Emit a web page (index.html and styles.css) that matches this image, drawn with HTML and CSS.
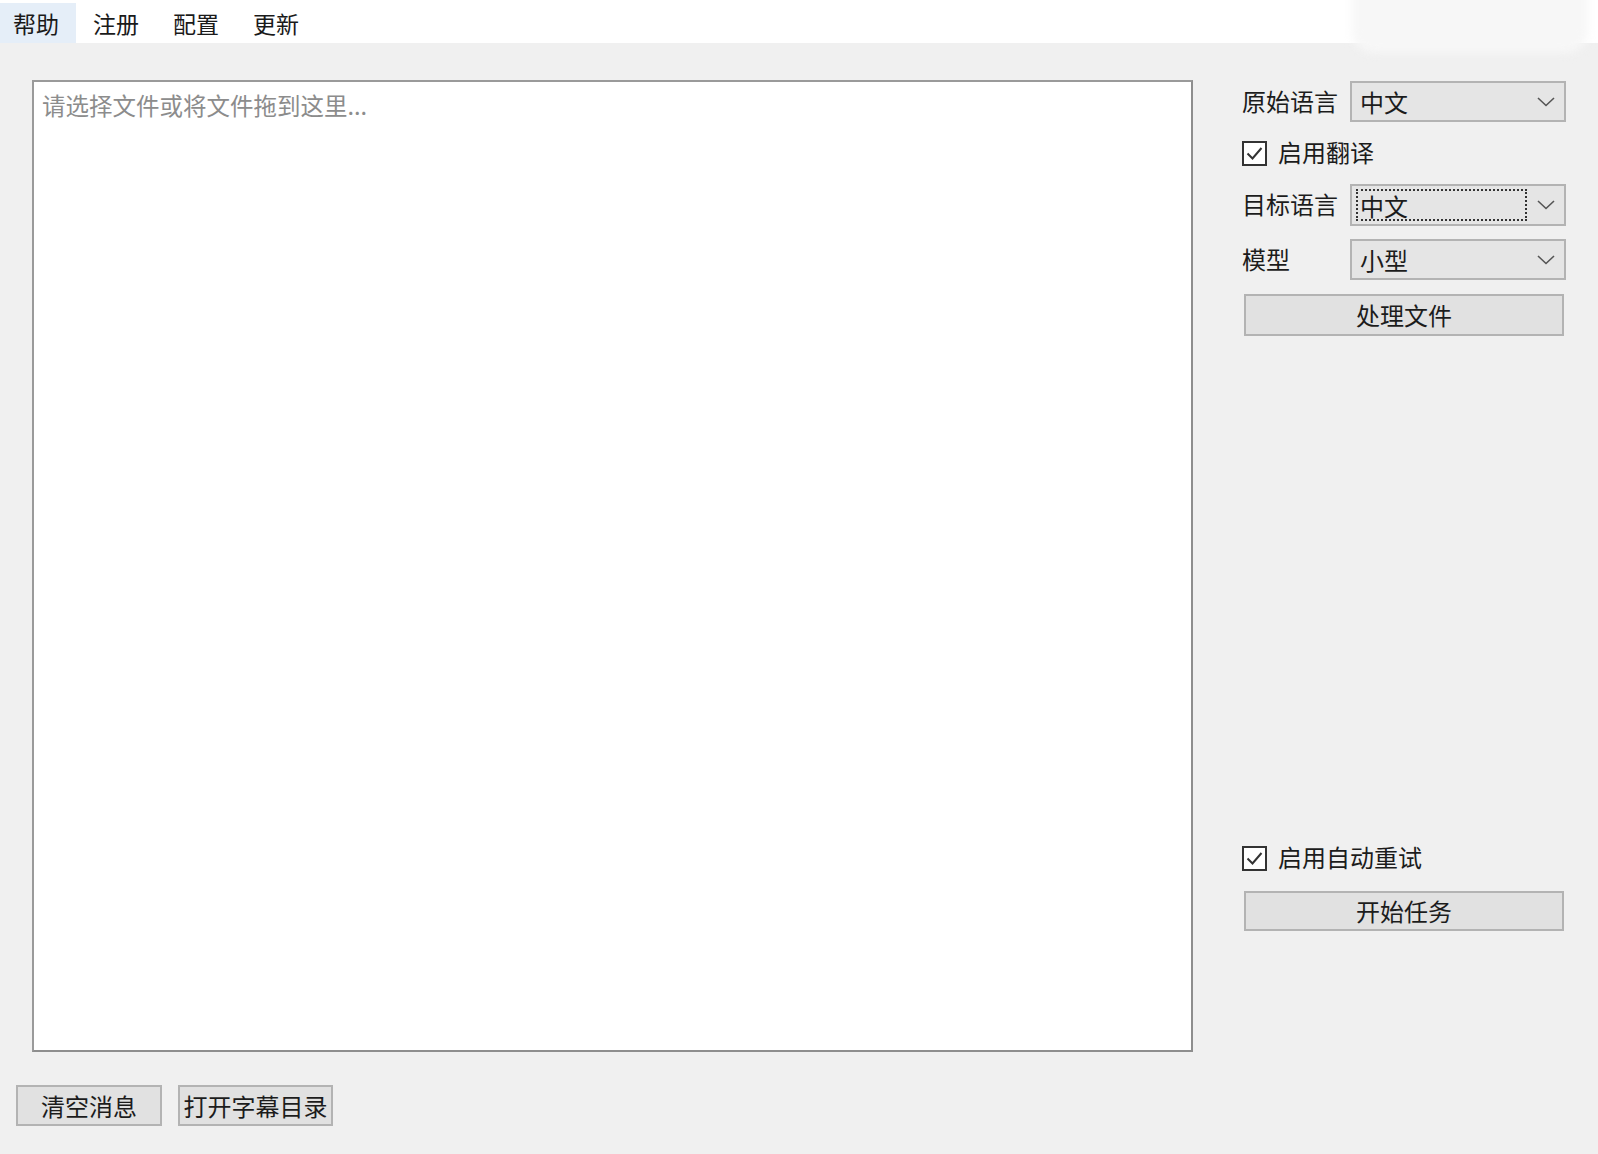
FILE: index.html
```html
<!DOCTYPE html>
<html lang="zh-CN">
<head>
	<meta charset="UTF-8"/>
	<title>字幕工具</title>
	<link rel="stylesheet" href="styles.css">
</head>
<body>
	<div class="menubar">
		<div class="menu-item active">帮助</div>
		<div class="menu-item">注册</div>
		<div class="menu-item">配置</div>
		<div class="menu-item">更新</div>
	</div>
	<div class="glare"></div>

	<div class="main">
		<textarea class="drop-box" placeholder="请选择文件或将文件拖到这里..."></textarea>

		<div class="side">
			<div class="row row-first">
				<span class="label">原始语言</span>
				<div class="combo">
					<span class="combo-text">中文</span>
					<svg class="chevron" width="18" height="10" viewBox="0 0 18 10"><path d="M1 1 L9 8.5 L17 1" fill="none" stroke="#555" stroke-width="1.6"/></svg>
				</div>
			</div>

			<label class="check check-first">
				<span class="box"><svg width="21" height="21" viewBox="0 0 21 21"><path d="M3.5 10.5 L8.5 15.5 L17.5 5" fill="none" stroke="#333" stroke-width="2"/></svg></span>
				<span>启用翻译</span>
			</label>

			<div class="row row-target">
				<span class="label">目标语言</span>
				<div class="combo">
					<span class="combo-text focus">中文</span>
					<svg class="chevron" width="18" height="10" viewBox="0 0 18 10"><path d="M1 1 L9 8.5 L17 1" fill="none" stroke="#555" stroke-width="1.6"/></svg>
				</div>
			</div>

			<div class="row row-model">
				<span class="label">模型</span>
				<div class="combo">
					<span class="combo-text">小型</span>
					<svg class="chevron" width="18" height="10" viewBox="0 0 18 10"><path d="M1 1 L9 8.5 L17 1" fill="none" stroke="#555" stroke-width="1.6"/></svg>
				</div>
			</div>

			<button class="btn btn-wide btn-process">处理文件</button>

			<label class="check check-retry">
				<span class="box"><svg width="21" height="21" viewBox="0 0 21 21"><path d="M3.5 10.5 L8.5 15.5 L17.5 5" fill="none" stroke="#333" stroke-width="2"/></svg></span>
				<span>启用自动重试</span>
			</label>

			<button class="btn btn-wide btn-start">开始任务</button>
		</div>
	</div>

	<div class="bottom">
		<button class="btn btn-clear">清空消息</button>
		<button class="btn btn-open">打开字幕目录</button>
	</div>
</body>
</html>
```

FILE: styles.css
```css
* { margin: 0; padding: 0; box-sizing: border-box; }
body {
	background-color: #f0f0f0;
	font-family: "Noto Sans CJK SC", "Microsoft YaHei", sans-serif;
	color: #1c1c1c;
	width: 1598px;
	height: 1154px;
	overflow: hidden;
	position: relative;
}

/* 菜单栏 */
.menubar {
	height: 43px;
	background-color: #fff;
	display: flex;
	align-items: flex-end;
	gap: 4px;
}
.menu-item {
	height: 40px;
	padding: 0 17px 0 13px;
	font-size: 23px;
	line-height: 40px;
	color: #1a1a1a;
}
.menu-item.active {
	background-color: #e5eef8;
}
.glare {
	position: absolute;
	left: 1352px;
	top: -12px;
	width: 236px;
	height: 65px;
	background-color: #f7f7f7;
	border-radius: 0 0 22px 22px;
	filter: blur(5px);
}

/* 主体 */
.main {
	display: flex;
	padding: 37px 0 0 32px;
}
.drop-box {
	width: 1161px;
	height: 972px;
	border: 2px solid #9a9a9a;
	border-right-color: #8e8e8e;
	border-bottom-color: #8e8e8e;
	background-color: #fff;
	resize: none;
	outline: none;
	padding: 10px 8px;
	font-family: "Noto Sans CJK SC", "Microsoft YaHei", sans-serif;
	font-size: 23.5px;
	line-height: 26px;
}
.drop-box::placeholder {
	color: #8c8c8c;
}

.side {
	width: 324px;
	margin-left: 49px;
	display: flex;
	flex-direction: column;
}
.row {
	display: flex;
	align-items: center;
}
.label {
	width: 108px;
	font-size: 24px;
	line-height: 1;
	margin-top: -2px;
}
.combo {
	width: 216px;
	height: 42px;
	background-color: #e5e5e5;
	border: 2px solid #b3b3b3;
	display: flex;
	align-items: center;
	justify-content: space-between;
	padding: 0 8px 0 4px;
}
.combo-text {
	font-size: 24px;
	line-height: 30px;
	height: 32px;
	padding: 0 3px 2px;
	border: 1px solid transparent;
	flex: 1;
}
.combo-text.focus {
	border: 2px dotted #333;
	padding: 0 2px 1px;
	margin-right: 10px;
}
.chevron {
	display: block;
	margin-right: 1px;
}
.row-first { margin-top: 1px; }
.row-first .combo { height: 41px; }
.row-target { margin-top: 18px; }
.row-model { margin-top: 13px; }
.row-model .combo { height: 41px; }

.check {
	display: flex;
	align-items: center;
	font-size: 24px;
	line-height: 1;
}
.check span:last-child { margin-top: -3px; }
.box {
	width: 25px;
	height: 25px;
	border: 2px solid #333;
	background-color: #fff;
	margin-right: 11px;
	display: flex;
	align-items: center;
	justify-content: center;
}
.box svg { display: block; }
.check-first { margin-top: 19px; }
.check-retry { margin-top: 510px; }

.btn {
	background-color: #e1e1e1;
	border: 2px solid #b3b3b3;
	font-family: "Noto Sans CJK SC", "Microsoft YaHei", sans-serif;
	font-size: 24px;
	color: #1c1c1c;
	line-height: 1;
}
.btn-wide {
	width: 320px;
	margin-left: 2px;
}
.btn-process {
	height: 42px;
	margin-top: 14px;
}
.btn-start {
	height: 40px;
	margin-top: 20px;
}

/* 底部按钮 */
.bottom {
	display: flex;
	gap: 16px;
	padding: 33px 0 0 16px;
}
.btn-clear {
	width: 146px;
	height: 41px;
}
.btn-open {
	width: 155px;
	height: 41px;
}
```
